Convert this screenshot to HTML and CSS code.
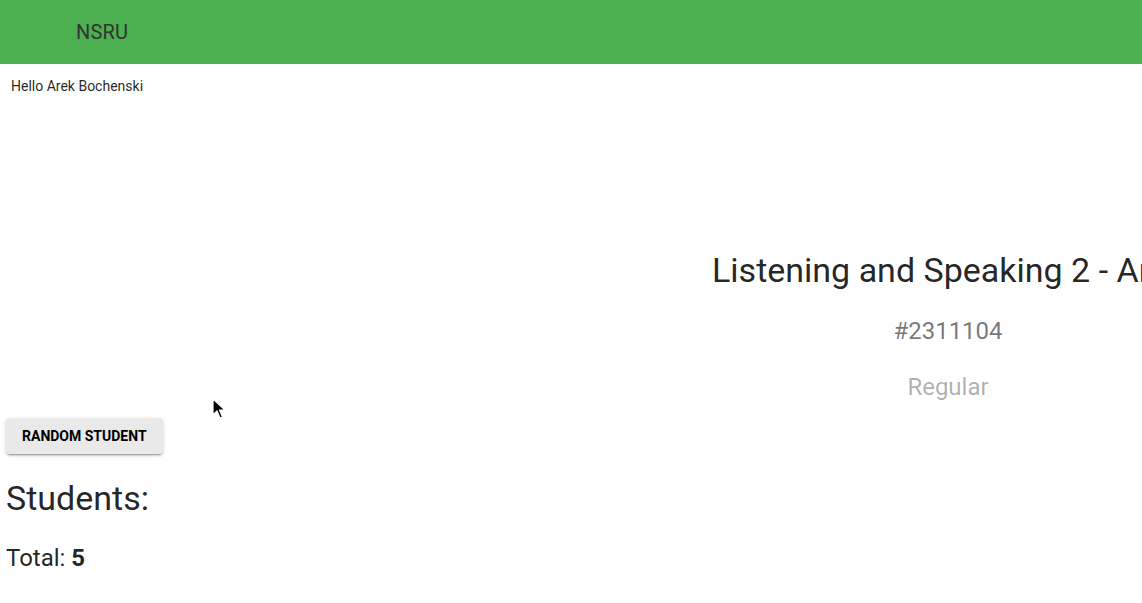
FILE: index.html
```html
<!DOCTYPE html>
<html lang="en">
<head>
<meta charset="utf-8">
<title>NSRU</title>
<link rel="stylesheet" href="styles.css">
</head>
<body>
<header class="appbar">
  <div class="brand">NSRU</div>
</header>
<main class="main">
  <p class="greeting">Hello Arek Bochenski</p>
  <section class="course">
    <div class="course-spacer"></div>
    <div class="course-info">
      <h1 class="course-title">Listening and Speaking 2 - Arek Bochenski</h1>
      <div class="course-code">#2311104</div>
      <div class="course-type">Regular</div>
    </div>
  </section>
  <button class="btn" type="button">Random Student</button>
  <h2 class="students-title">Students:</h2>
  <div class="total">Total: <strong>5</strong></div>
</main>
<svg class="cursor" width="14" height="22" viewBox="0 0 14 22" aria-hidden="true">
  <path d="M1 1 L1 17 L5 13 L8 20 L10.5 19 L7.5 12 L13 12 Z" fill="#000" stroke="#fff" stroke-width="1.2" stroke-linejoin="round"/>
</svg>
</body>
</html>
```

FILE: styles.css
```css
html, body {
  margin: 0;
  padding: 0;
  overflow-x: hidden;
  background: #fff;
  font-family: Roboto, "Liberation Sans", sans-serif;
  color: rgba(0, 0, 0, 0.87);
}

.appbar {
  height: 64px;
  background: #4caf50;
  display: flex;
  align-items: center;
  padding-left: 76px;
  box-sizing: border-box;
}

.brand {
  font-size: 20px;
  color: #333;
  letter-spacing: 0.01em;
}

.main {
  padding: 0 6px;
}

.greeting {
  margin: 12px 0 0 5px;
  font-size: 14px;
  line-height: 20px;
}

.course {
  display: grid;
  grid-template-columns: 707px 470px;
  margin-top: 153px;
}

.course-info {
  text-align: center;
}

.course-title {
  margin: 0 0 0 -1px;
  font-size: 34px;
  font-weight: 400;
  line-height: 42px;
  white-space: nowrap;
  color: rgba(0, 0, 0, 0.87);
}

.course-code {
  margin-top: 24px;
  font-size: 24px;
  line-height: 32px;
  color: rgba(0, 0, 0, 0.54);
}

.course-type {
  margin-top: 24px;
  font-size: 24px;
  line-height: 32px;
  color: rgba(0, 0, 0, 0.32);
}

.btn {
  display: block;
  margin-top: 15px;
  height: 36px;
  padding: 6px 16px;
  border: 0;
  border-radius: 4px;
  background: #e9e9e9;
  box-shadow: 0 3px 1px -2px rgba(0,0,0,0.2), 0 2px 2px 0 rgba(0,0,0,0.14), 0 1px 5px 0 rgba(0,0,0,0.12);
  font-family: Roboto, "Liberation Sans", sans-serif;
  font-size: 14px;
  font-weight: 700;
  letter-spacing: 0;
  text-transform: uppercase;
  color: #000;
}

.students-title {
  margin: 23px 0 0;
  font-size: 34px;
  font-weight: 400;
  line-height: 42px;
}

.total {
  margin-top: 23px;
  font-size: 24px;
  line-height: 32px;
}

.total strong {
  font-weight: 700;
}

.cursor {
  position: absolute;
  left: 212px;
  top: 398px;
}
```
